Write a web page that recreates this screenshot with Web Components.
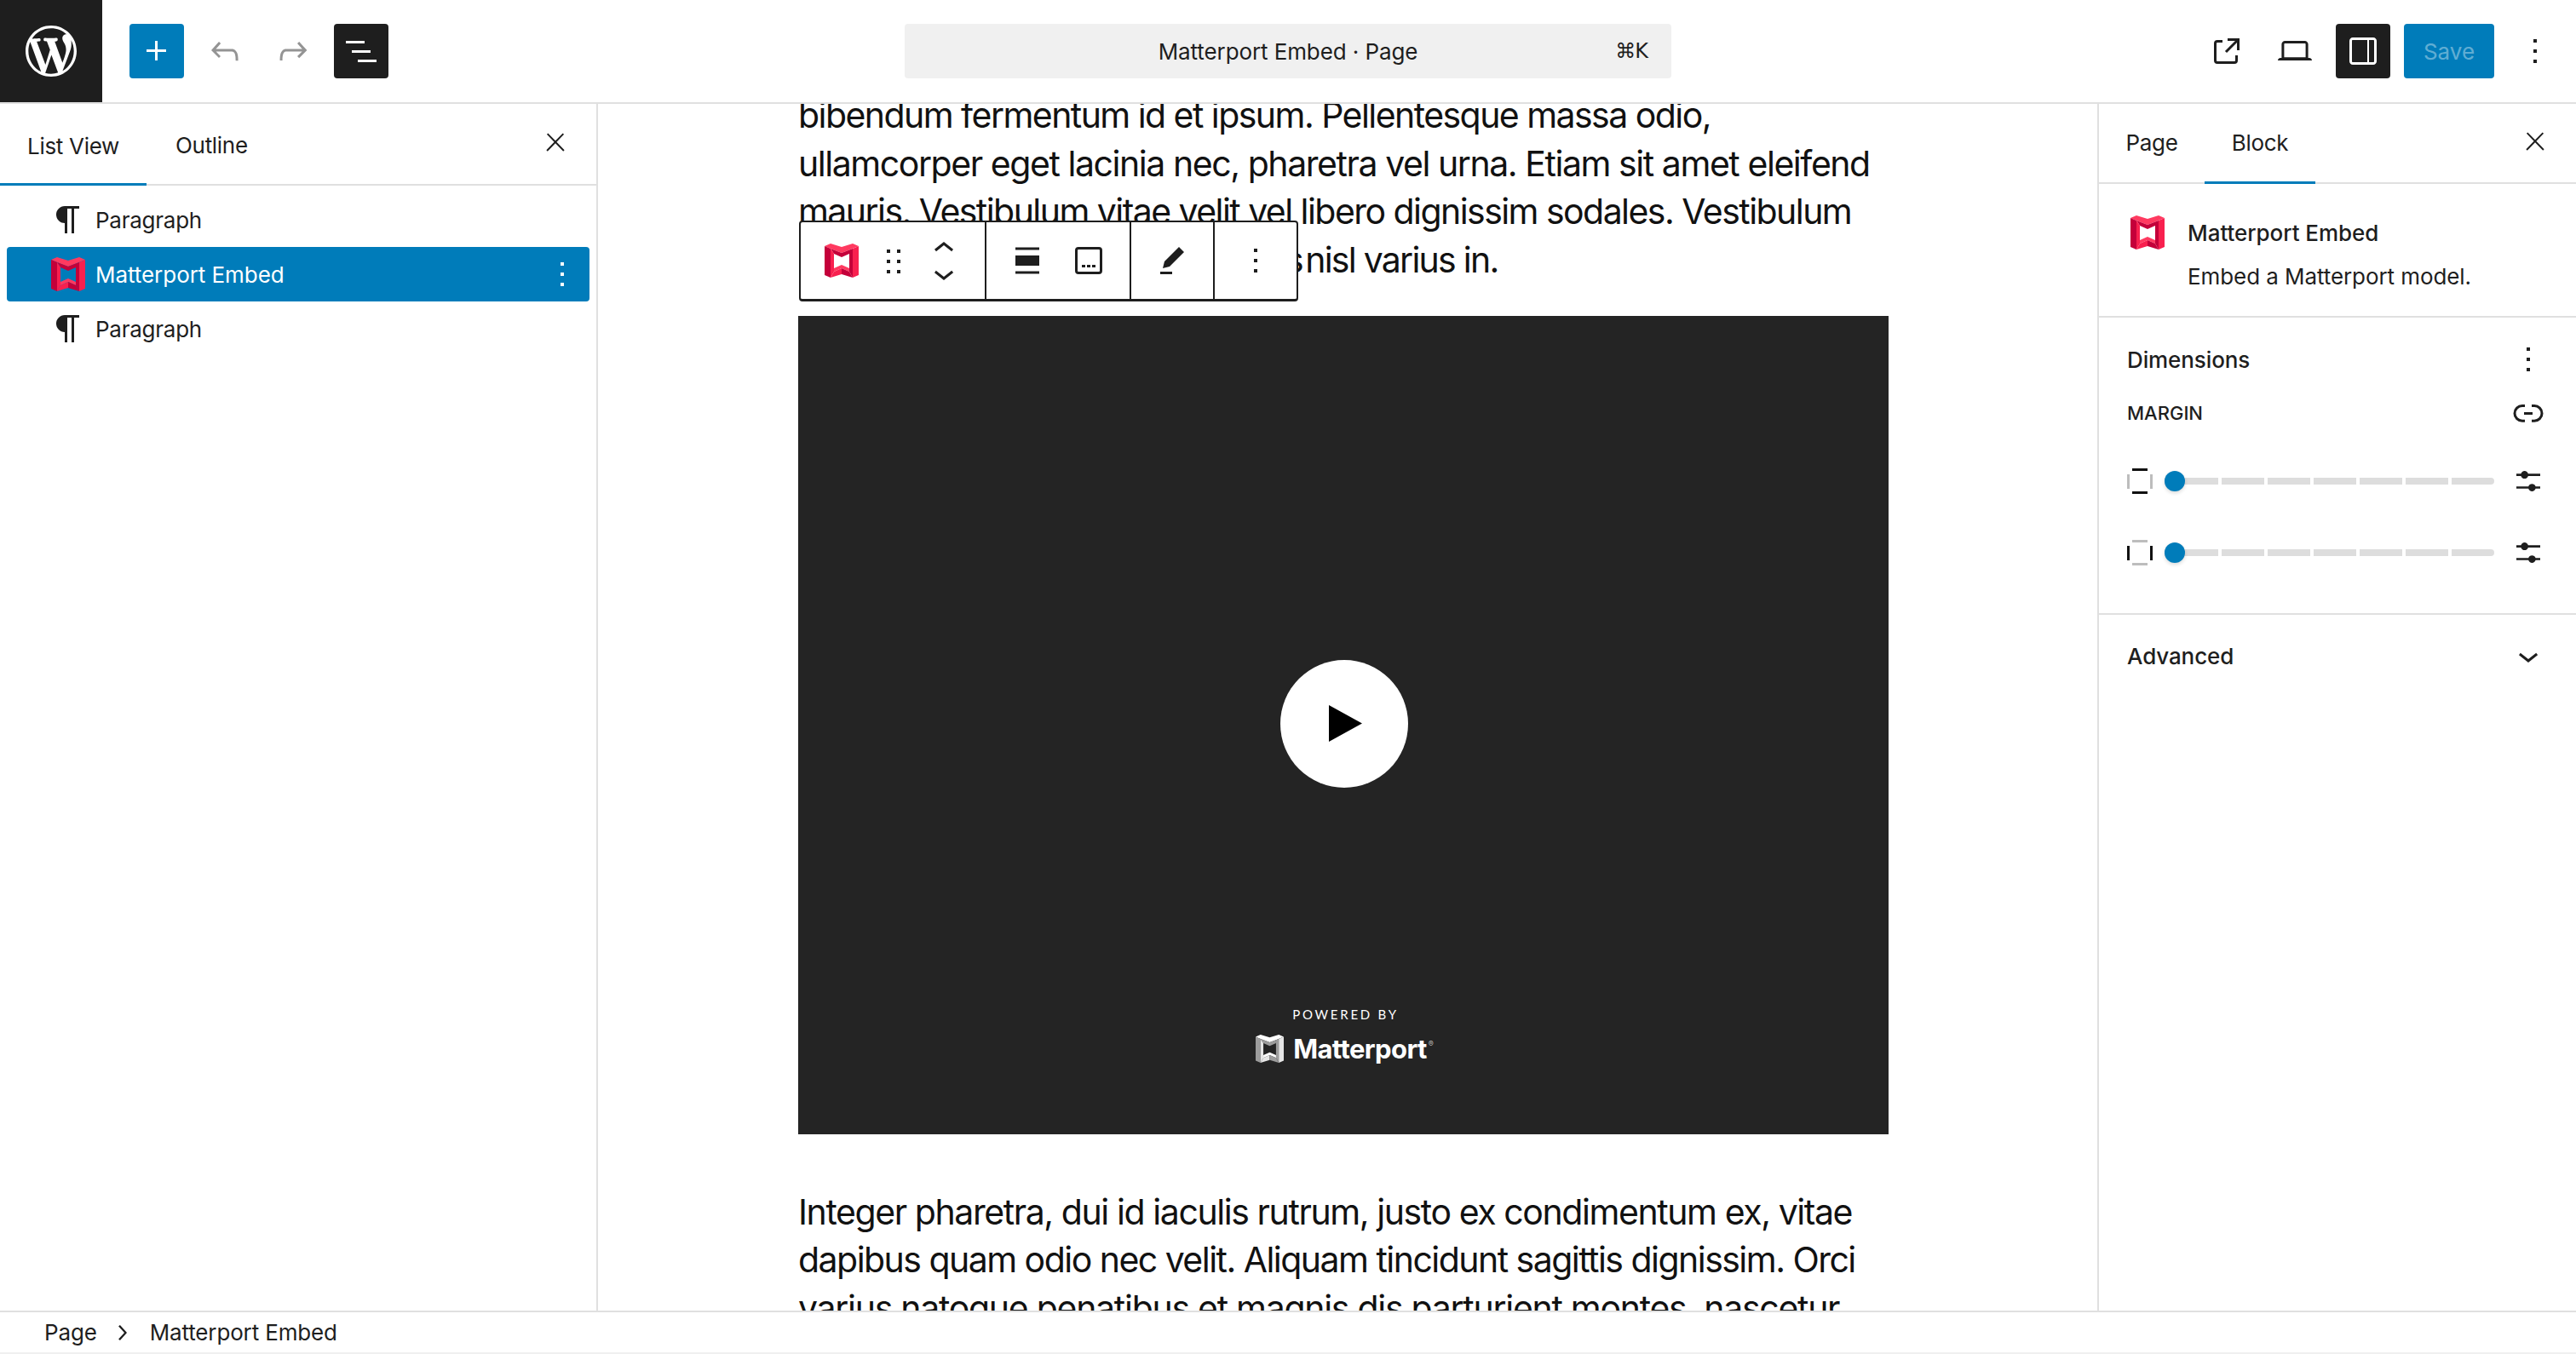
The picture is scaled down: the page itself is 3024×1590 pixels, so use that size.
<!DOCTYPE html>
<html lang="en">
<head>
<meta charset="utf-8">
<title>Matterport Embed · Page</title>
<style>
  html, body { margin: 0; height: 100%; background: #fff; }
  body { font-family: Inter, "Liberation Sans", sans-serif; font-size: 26px; color: #1e1e1e; }
</style>
</head>
<body>
<wp-app>
  <wp-topbar slot="top"></wp-topbar>
  <wp-list-view slot="left"></wp-list-view>
  <wp-canvas slot="canvas"></wp-canvas>
  <wp-inspector slot="right"></wp-inspector>
  <wp-breadcrumb slot="foot"></wp-breadcrumb>
</wp-app>

<script>
const ICONS = {
  plus: 'M11 12.5V17.5H12.5V12.5H17.5V11H12.5V6H11V11H6V12.5H11Z',
  undo: 'M18.3 11.7c-.6-.6-1.4-.9-2.3-.9H6.7l2.9-3.3-1.1-1-4.5 5L8.5 16l1-1-2.7-2.7H16c.5 0 .9.2 1.3.5 1 1 1 3.4 1 4.5v.3h1.5v-.2c0-1.5 0-4.3-1.5-5.7z',
  redo: 'M15.6 6.5l-1.1 1 2.9 3.3H8c-.9 0-1.7.3-2.3.9-1.4 1.5-1.4 4.2-1.4 5.6v.2h1.5v-.3c0-1.1 0-3.5 1-4.5.3-.3.7-.5 1.3-.5h9.2L14.5 15l1.1 1.1 4.6-4.6-4.6-5z',
  list: 'M3 6h11v1.5H3V6Zm3.5 5.5h11V13h-11v-1.5ZM21 17H10v1.5h11V17Z',
  close: 'M13 11.8l6.1-6.3-1-1-6.1 6.2-6.1-6.2-1 1 6.1 6.3-6.5 6.7 1 1 6.5-6.6 6.5 6.6 1-1z',
  paragraph: 'm9.99609 14v-.2251l.00391.0001v6.225h1.5v-14.5h2.5v14.5h1.5v-14.5h3v-1.5h-8.50391c-2.76142 0-5 2.23858-5 5 0 2.7614 2.23858 5 5 5z',
  more: 'M13 19h-2v-2h2v2zm0-6h-2v-2h2v2zm0-6h-2V5h2v2z',
  drag: 'M8.5 7.5h2v-2h-2v2zm0 6h2v-2h-2v2zm0 6h2v-2h-2v2zm6-14v2h2v-2h-2zm0 8h2v-2h-2v2zm0 6h2v-2h-2v2z',
  up: 'M6.5 12.4L12 8l5.5 4.4-.9 1.2L12 10l-4.5 3.6-1-1.2z',
  down: 'M17.5 11.6L12 16l-5.5-4.4.9-1.2L12 14l4.6-3.6 1 1.2z',
  align: 'M5 15h14V9H5v6zm0 4.8h14v-1.5H5v1.5zM5 4.2v1.5h14V4.2H5z',
  caption: 'M6 5.5h12a.5.5 0 0 1 .5.5v12a.5.5 0 0 1-.5.5H6a.5.5 0 0 1-.5-.5V6a.5.5 0 0 1 .5-.5ZM4 6a2 2 0 0 1 2-2h12a2 2 0 0 1 2 2v12a2 2 0 0 1-2 2H6a2 2 0 0 1-2-2V6Zm4 10h2v-1.5H8V16Zm5 0h-2v-1.5h2V16Zm1 0h2v-1.5h-2V16Z',
  pencil: 'm19 7-3-3-8.5 8.5-1 4 4-1L19 7Zm-7 11.5H5V20h7v-1.5Z',
  external: 'M19.5 4.5h-7V6h4.44l-5.97 5.97 1.06 1.06L18 7.06v4.44h1.5v-7Zm-13 1a2 2 0 0 0-2 2v10a2 2 0 0 0 2 2h10a2 2 0 0 0 2-2v-3H17v3a.5.5 0 0 1-.5.5h-10a.5.5 0 0 1-.5-.5v-10a.5.5 0 0 1 .5-.5h3V5.5h-3Z',
  laptop: 'M20.5 16h-.7V8c0-1.1-.9-2-2-2H6.2c-1.1 0-2 .9-2 2v8h-.7c-.8 0-1.5.7-1.5 1.5h20c0-.8-.7-1.5-1.5-1.5zM5.7 8c0-.3.2-.5.5-.5h11.6c.3 0 .5.2.5.5v7.6H5.7V8z',
  drawer: 'M18 4H6c-1.1 0-2 .9-2 2v12c0 1.1.9 2 2 2h12c1.1 0 2-.9 2-2V6c0-1.1-.9-2-2-2zM5.5 18V6c0-.3.2-.5.5-.5h8.5v13H6c-.3 0-.5-.2-.5-.5zm13 0c0 .3-.2.5-.5.5h-2.5v-13H18c.3 0 .5.2.5.5v12z',
  sliders: 'M14.5 13.8c-1.1 0-2.1.7-2.4 1.8H4V17h8.1c.3 1 1.3 1.8 2.4 1.8s2.1-.7 2.4-1.8H20v-1.5h-3.1c-.3-1-1.3-1.7-2.4-1.7zM11.9 7c-.3-1-1.3-1.8-2.4-1.8S7.4 6 7.1 7H4v1.5h3.1c.3 1 1.3 1.8 2.4 1.8s2.1-.7 2.4-1.8H20V7h-8.1z',
  link: 'M10 17.389H8.444A5.194 5.194 0 1 1 8.444 7H10v1.5H8.444a3.694 3.694 0 0 0 0 7.389H10v1.5ZM14 7h1.556a5.194 5.194 0 0 1 0 10.39H14v-1.5h1.556a3.694 3.694 0 0 0 0-7.39H14V7Zm-4.5 6h5v-1.5h-5V13Z',
  right: 'M10.6 6L9.4 7l4.6 5-4.6 5 1.2 1 5.4-6z',
};
const WP_MARK = 'M20 10c0-5.51-4.49-10-10-10C4.48 0 0 4.49 0 10c0 5.52 4.48 10 10 10 5.51 0 10-4.48 10-10zM7.78 15.37L4.37 6.22c.55-.02 1.17-.08 1.17-.08.5-.06.44-1.13-.06-1.11 0 0-1.45.11-2.37.11-.18 0-.37 0-.58-.01C4.12 2.69 6.87 1.11 10 1.11c2.33 0 4.45.87 6.05 2.34-.68-.11-1.65.39-1.65 1.58 0 .74.45 1.36.9 2.1.35.61.55 1.36.55 2.46 0 1.49-1.4 5-1.4 5l-3.03-8.37c.54-.02.82-.17.82-.17.5-.05.44-1.25-.06-1.22 0 0-1.44.12-2.38.12-.87 0-2.33-.12-2.33-.12-.5-.03-.56 1.2-.06 1.22l.92.08 1.26 3.41zM17.41 10c.24-.64.74-1.87.43-4.25.7 1.29 1.05 2.71 1.05 4.25 0 3.29-1.73 6.24-4.4 7.78.97-2.59 1.94-5.2 2.92-7.78zM6.1 18.09C3.12 16.65 1.11 13.53 1.11 10c0-1.3.23-2.48.72-3.59C3.25 10.3 4.67 14.2 6.1 18.09zm4.03-6.63l2.58 6.98c-.86.29-1.76.45-2.71.45-.79 0-1.57-.11-2.29-.33.81-2.38 1.62-4.74 2.42-7.1z';

class WpIcon extends HTMLElement {
  constructor() {
    super();
    this.attachShadow({ mode: 'open' });
  }
  connectedCallback() {
    const size = this.getAttribute('size') || 48;
    const path = ICONS[this.getAttribute('name')];
    this.shadowRoot.innerHTML = `
      <style>
        :host { display: inline-flex; flex: none; width: ${size}px; height: ${size}px; }
        svg { display: block; fill: currentColor; fill-rule: evenodd; }
      </style>
      <svg viewBox="0 0 24 24" width="${size}" height="${size}"><path d="${path}"/></svg>
    `;
  }
}
customElements.define('wp-icon', WpIcon);

class MatterportLogo extends HTMLElement {
  constructor() {
    super();
    this.attachShadow({ mode: 'open' });
  }
  connectedCallback() {
    const size = this.getAttribute('size') || 40;
    const mono = this.hasAttribute('mono');
    const light = mono ? '#ffffff' : '#ff3a60';
    const mid = mono ? '#e6e6e6' : '#f8204f';
    const dark = mono ? '#9c9c9c' : '#c4003a';
    this.shadowRoot.innerHTML = `
      <style>
        :host { display: inline-flex; flex: none; width: ${size}px; height: ${size}px; }
        svg { display: block; }
      </style>
      <svg viewBox="0 0 40 40" width="${size}" height="${size}">
        <polygon fill="${light}" points="0,3 7,0 20,4 33,0 40,3 29,7.5 20,11 7,6"/>
        <polygon fill="${dark}" points="7,6 20,11 29,7.5 29,12 20,16 11,12"/>
        <polygon fill="${dark}" points="0,3 7,6 7,40 0,37"/>
        <polygon fill="${mid}" points="7,6 11,12 11,33 7,40"/>
        <polygon fill="${dark}" points="29,7.5 33,6 33,40 29,33"/>
        <polygon fill="${mid}" points="33,6 40,3 40,37 33,40"/>
        <polygon fill="${light}" points="11,29 20,25 29,29 29,33 20,29 11,33"/>
        <polygon fill="${mid}" points="7,40 11,33 20,29 20,36"/>
        <polygon fill="${dark}" points="20,29 29,33 33,40 20,36"/>
      </svg>
    `;
  }
}
customElements.define('matterport-logo', MatterportLogo);

class WpApp extends HTMLElement {
  constructor() {
    super();
    this.attachShadow({ mode: 'open' });
    this.shadowRoot.innerHTML = `
      <style>
        :host {
          display: grid;
          width: 3024px;
          height: 1590px;
          overflow: hidden;
          grid-template-columns: 702px 1fr 562px;
          grid-template-rows: 122px 1417px 51px;
          grid-template-areas: "top top top" "left canvas right" "foot foot foot";
        }
        ::slotted([slot=top]) { grid-area: top; }
        ::slotted([slot=left]) { grid-area: left; }
        ::slotted([slot=canvas]) { grid-area: canvas; }
        ::slotted([slot=right]) { grid-area: right; }
        ::slotted([slot=foot]) { grid-area: foot; }
      </style>
      <slot name="top"></slot>
      <slot name="left"></slot>
      <slot name="canvas"></slot>
      <slot name="right"></slot>
      <slot name="foot"></slot>
    `;
  }
}
customElements.define('wp-app', WpApp);

class WpTopbar extends HTMLElement {
  constructor() {
    super();
    this.attachShadow({ mode: 'open' });
    this.shadowRoot.innerHTML = `
      <style>
        :host {
          display: grid;
          grid-template-columns: 1fr 900px 1fr;
          align-items: center;
          border-bottom: 2px solid #e0e0e0;
          box-sizing: border-box;
          height: 122px;
        }
        .left { display: flex; align-items: center; }
        .wp {
          width: 120px; height: 120px;
          background: #1e1e1e;
          display: flex; align-items: center; justify-content: center;
          margin-right: 32px;
        }
        .wp svg { fill: #fff; display: block; }
        .tools { display: flex; gap: 16px; }
        .btn {
          width: 64px; height: 64px;
          display: flex; align-items: center; justify-content: center;
          border-radius: 4px;
        }
        .blue { background: #007cba; color: #fff; }
        .black { background: #1e1e1e; color: #fff; }
        .off { color: #949494; }
        .command {
          height: 64px;
          background: #f0f0f0;
          border-radius: 4px;
          display: flex; align-items: center; justify-content: center;
          position: relative;
          letter-spacing: -0.1px;
        }
        .kbd { position: absolute; right: 28px; font-family: "DejaVu Sans", Inter, sans-serif; font-size: 24px; letter-spacing: -1px; }
        .right { display: flex; gap: 16px; justify-content: flex-end; padding-right: 16px; }
        .save {
          width: 106px; height: 64px;
          background: #007cba; color: rgba(255,255,255,.4);
          border-radius: 4px;
          display: flex; align-items: center; justify-content: center;
        }
      </style>
      <div class="left">
        <div class="wp"><svg viewBox="0 0 20 20" width="60" height="60"><path d="${WP_MARK}"/></svg></div>
        <div class="tools">
          <div class="btn blue"><wp-icon name="plus"></wp-icon></div>
          <div class="btn off"><wp-icon name="undo"></wp-icon></div>
          <div class="btn off"><wp-icon name="redo"></wp-icon></div>
          <div class="btn black"><wp-icon name="list"></wp-icon></div>
        </div>
      </div>
      <div class="command">
        <span>Matterport Embed · Page</span>
        <span class="kbd">⌘K</span>
      </div>
      <div class="right">
        <div class="btn"><wp-icon name="external"></wp-icon></div>
        <div class="btn"><wp-icon name="laptop"></wp-icon></div>
        <div class="btn black"><wp-icon name="drawer"></wp-icon></div>
        <div class="save">Save</div>
        <div class="btn"><wp-icon name="more"></wp-icon></div>
      </div>
    `;
  }
}
customElements.define('wp-topbar', WpTopbar);

class WpListRow extends HTMLElement {
  constructor() {
    super();
    this.attachShadow({ mode: 'open' });
  }
  connectedCallback() {
    const selected = this.hasAttribute('selected');
    const icon = this.getAttribute('icon');
    this.shadowRoot.innerHTML = `
      <style>
        :host {
          display: flex;
          align-items: center;
          height: 64px;
          padding: 0 8px 0 48px;
          gap: 8px;
          border-radius: 4px;
          background: ${selected ? '#007cba' : 'transparent'};
          color: ${selected ? '#fff' : '#1e1e1e'};
        }
        .ico { width: 48px; height: 48px; display: flex; align-items: center; justify-content: center; flex: none; }
        .label { flex: 1; letter-spacing: ${selected ? '-0.05px' : '-0.25px'}; }
      </style>
      <div class="ico">
        ${icon === 'matterport' ? '<matterport-logo></matterport-logo>' : `<wp-icon name="${icon}"></wp-icon>`}
      </div>
      <span class="label"><slot></slot></span>
      ${selected ? '<wp-icon name="more"></wp-icon>' : ''}
    `;
  }
}
customElements.define('wp-list-row', WpListRow);

class WpListView extends HTMLElement {
  constructor() {
    super();
    this.attachShadow({ mode: 'open' });
    this.shadowRoot.innerHTML = `
      <style>
        :host { display: block; border-right: 2px solid #e0e0e0; box-sizing: border-box; }
        .tabs {
          display: flex; align-items: center;
          height: 96px;
          border-bottom: 2px solid #e0e0e0;
          box-sizing: border-box;
        }
        .tab { height: 94px; line-height: 98px; box-sizing: border-box; letter-spacing: -0.3px; }
        .tab.on { width: 172px; padding-left: 32px; box-shadow: inset 0 -3px 0 #007cba; margin-bottom: -2px; height: 96px; line-height: 100px; }
        .tab + .tab { padding-left: 34px; }
        .close { margin-left: auto; margin-right: 31px; margin-top: -4px; }
        .rows { display: flex; flex-direction: column; padding: 8px; }
      </style>
      <div class="tabs">
        <div class="tab on">List View</div>
        <div class="tab">Outline</div>
        <wp-icon class="close" name="close" size="34"></wp-icon>
      </div>
      <div class="rows">
        <wp-list-row icon="paragraph">Paragraph</wp-list-row>
        <wp-list-row icon="matterport" selected>Matterport Embed</wp-list-row>
        <wp-list-row icon="paragraph">Paragraph</wp-list-row>
      </div>
    `;
  }
}
customElements.define('wp-list-view', WpListView);

class WpPara extends HTMLElement {
  constructor() {
    super();
    this.attachShadow({ mode: 'open' });
    this.shadowRoot.innerHTML = `
      <style>
        :host { display: block; font-size: 41px; line-height: 56.67px; color: #111; letter-spacing: -1.5px; }
        ::slotted(span) { display: block; white-space: nowrap; }
      </style>
      <slot></slot>
    `;
  }
}
customElements.define('wp-para', WpPara);

class WpBlockToolbar extends HTMLElement {
  constructor() {
    super();
    this.attachShadow({ mode: 'open' });
    this.shadowRoot.innerHTML = `
      <style>
        :host {
          position: absolute;
          left: 1px; top: 152px;
          display: flex;
          height: 95px;
          box-sizing: border-box;
          background: #fff;
          border: 2px solid #1e1e1e;
          border-bottom-width: 3px;
          border-radius: 4px;
          color: #1e1e1e;
        }
        .group { display: flex; align-items: center; padding: 0 24px; border-right: 2px solid #1e1e1e; }
        .group:last-child { border-right: 0; }
        .one { gap: 12px; width: 168px; }
        .two { gap: 24px; }
        .mover { width: 48px; height: 77px; display: flex; flex-direction: column; }
        .mover wp-icon + wp-icon { margin-top: -19px; }
      </style>
      <div class="group one">
        <matterport-logo style="margin:0 4px"></matterport-logo>
        <wp-icon name="drag"></wp-icon>
        <div class="mover">
          <wp-icon name="up"></wp-icon>
          <wp-icon name="down"></wp-icon>
        </div>
      </div>
      <div class="group two">
        <wp-icon name="align"></wp-icon>
        <wp-icon name="caption"></wp-icon>
      </div>
      <div class="group"><wp-icon name="pencil"></wp-icon></div>
      <div class="group"><wp-icon name="more"></wp-icon></div>
    `;
  }
}
customElements.define('wp-block-toolbar', WpBlockToolbar);

class WpVideo extends HTMLElement {
  constructor() {
    super();
    this.attachShadow({ mode: 'open' });
    this.shadowRoot.innerHTML = `
      <style>
        :host {
          display: flex; flex-direction: column; align-items: center;
          height: 961px;
          box-sizing: border-box;
          padding-top: 404px;
          background: #242424;
          color: #fff;
        }
        .play {
          width: 150px; height: 150px; border-radius: 50%;
          background: #fff;
          margin-left: 2px;
          display: flex; align-items: center; justify-content: center;
        }
        .play svg { margin-left: 3px; display: block; }
        .powered {
          margin: 256px 0 0 5px;
          font-family: Lato, sans-serif;
          font-size: 15px; line-height: 20px;
          letter-spacing: 2.75px;
          white-space: nowrap;
        }
        .brand { display: flex; align-items: center; margin: 14px 0 0 3px; height: 33px; gap: 11px; }
        .name { font-weight: 700; font-size: 31px; letter-spacing: -0.6px; line-height: 33px; }
        .name sup { font-size: 9px; font-weight: 400; vertical-align: 14px; line-height: 0; letter-spacing: 0; margin-left: 2px; color: #bbb; }
      </style>
      <div class="play"><svg width="39" height="43" viewBox="0 0 39 43"><polygon points="0,0 39,21.5 0,43" fill="#000"/></svg></div>
      <div class="powered">POWERED BY</div>
      <div class="brand">
        <matterport-logo mono size="33"></matterport-logo>
        <span class="name">Matterport<sup>®</sup></span>
      </div>
    `;
  }
}
customElements.define('wp-video', WpVideo);

class WpCanvas extends HTMLElement {
  constructor() {
    super();
    this.attachShadow({ mode: 'open' });
    this.shadowRoot.innerHTML = `
      <style>
        :host { display: block; overflow: hidden; background: #fff; }
        .page { position: relative; width: 1280px; margin: -15px 0 0 235px; }
        wp-video { margin: 37px 0 63px; }
      </style>
      <div class="page">
        <wp-para>
          <span style="letter-spacing:-1.55px">bibendum fermentum id et ipsum. Pellentesque massa odio,</span>
          <span style="letter-spacing:-1.44px">ullamcorper eget lacinia nec, pharetra vel urna. Etiam sit amet eleifend</span>
          <span style="letter-spacing:-1.55px">mauris. Vestibulum vitae velit vel libero dignissim sodales. Vestibulum</span>
          <span style="padding-left:572px;letter-spacing:-1.75px"><i style="font-style:normal;letter-spacing:-5px">s </i>nisl varius in.</span>
        </wp-para>
        <wp-block-toolbar></wp-block-toolbar>
        <wp-video></wp-video>
        <wp-para>
          <span style="letter-spacing:-1.42px">Integer pharetra, dui id iaculis rutrum, justo ex condimentum ex, vitae</span>
          <span style="letter-spacing:-1.53px">dapibus quam odio nec velit. Aliquam tincidunt sagittis dignissim. Orci</span>
          <span style="letter-spacing:-1.28px">varius natoque penatibus et magnis dis parturient montes, nascetur</span>
        </wp-para>
      </div>
    `;
  }
}
customElements.define('wp-canvas', WpCanvas);

class WpSlider extends HTMLElement {
  constructor() {
    super();
    this.attachShadow({ mode: 'open' });
  }
  connectedCallback() {
    const vertical = this.getAttribute('side') === 'vertical';
    const on = '#111', off = '#bdbdbd';
    this.shadowRoot.innerHTML = `
      <style>
        :host { display: flex; align-items: center; gap: 14px; height: 48px; }
        svg { display: block; flex: none; }
        .track { position: relative; flex: none; width: 387px; height: 8px; display: grid; grid-template-columns: 63px repeat(6, 1fr); gap: 4px; }
        .track i { background: #ddd; }
        .track i:last-of-type { border-radius: 0 4px 4px 0; }
        .thumb {
          position: absolute; left: 0; top: -8px;
          width: 24px; height: 24px; border-radius: 50%;
          background: #007cba;
          box-shadow: 0 2px 4px rgba(0,0,0,.15);
        }
      </style>
      <svg width="30" height="30" viewBox="0 0 30 30">
        <rect x="6" y="0" width="18" height="3" fill="${vertical ? off : on}"/>
        <rect x="6" y="27" width="18" height="3" fill="${vertical ? off : on}"/>
        <rect x="0" y="7" width="3" height="17" fill="${vertical ? on : off}"/>
        <rect x="27" y="7" width="3" height="17" fill="${vertical ? on : off}"/>
      </svg>
      <div class="track">
        <i></i><i></i><i></i><i></i><i></i><i></i><i></i>
        <div class="thumb"></div>
      </div>
      <wp-icon name="sliders" size="42" style="margin-left:5px"></wp-icon>
    `;
  }
}
customElements.define('wp-slider', WpSlider);

class WpInspector extends HTMLElement {
  constructor() {
    super();
    this.attachShadow({ mode: 'open' });
    this.shadowRoot.innerHTML = `
      <style>
        :host { display: block; border-left: 2px solid #e0e0e0; box-sizing: border-box; }
        .tabs {
          display: flex; align-items: center;
          height: 92px;
          border-bottom: 2px solid #e0e0e0;
        }
        .tab { height: 92px; line-height: 92px; box-sizing: border-box; letter-spacing: -0.3px; text-align: center; }
        .page-tab { width: 124px; }
        .tab.on { width: 130px; box-shadow: inset 0 -3px 0 #007cba; height: 94px; line-height: 92px; margin-bottom: -2px; }
        .close { margin-left: auto; margin-right: 31px; margin-top: -4px; }
        .card {
          display: grid;
          grid-template-columns: 40px 1fr;
          align-content: start;
          column-gap: 32px;
          padding: 37px 32px 0 33px;
          box-sizing: border-box;
          border-bottom: 2px solid #e0e0e0;
          height: 157px;
        }
        .card matterport-logo { grid-row: span 2; margin-left: 4px; }
        .title { font-weight: 500; line-height: 42px; letter-spacing: -0.05px; margin-left: -1px; }
        .desc { line-height: 42px; margin: 9px 0 0 -1px; letter-spacing: -0.08px; }
        .dims { height: 349px; box-sizing: border-box; border-bottom: 2px solid #e0e0e0; padding: 25px 32px 0 33px; }
        .head { display: flex; justify-content: space-between; align-items: center; height: 48px; font-weight: 500; letter-spacing: -0.1px; }
        .margin { display: flex; justify-content: space-between; align-items: center; height: 48px; margin-top: 15px; font-size: 22px; font-weight: 500; }
        wp-slider { margin-top: 36px; }
        .margin + wp-slider { margin-top: 32px; }
        .adv { padding: 0 32px 0 33px; height: 96px; display: flex; justify-content: space-between; align-items: center; font-weight: 500; letter-spacing: -0.1px; }
      </style>
      <div class="tabs">
        <div class="tab page-tab">Page</div>
        <div class="tab on">Block</div>
        <wp-icon class="close" name="close" size="34"></wp-icon>
      </div>
      <div class="card">
        <matterport-logo></matterport-logo>
        <div class="title">Matterport Embed</div>
        <div class="desc">Embed a Matterport model.</div>
      </div>
      <div class="dims">
        <div class="head">Dimensions <wp-icon name="more"></wp-icon></div>
        <div class="margin">MARGIN <wp-icon name="link"></wp-icon></div>
        <wp-slider side="horizontal"></wp-slider>
        <wp-slider side="vertical"></wp-slider>
      </div>
      <div class="adv">Advanced <wp-icon name="down"></wp-icon></div>
    `;
  }
}
customElements.define('wp-inspector', WpInspector);

class WpBreadcrumb extends HTMLElement {
  constructor() {
    super();
    this.attachShadow({ mode: 'open' });
    this.shadowRoot.innerHTML = `
      <style>
        :host {
          display: flex; align-items: center;
          border-top: 2px solid #e0e0e0;
          border-bottom: 2px solid #f0f0f0;
          box-sizing: border-box;
          padding-left: 52px;
          letter-spacing: -0.15px;
        }
        wp-icon { margin: 0 15px 0 11px; }
      </style>
      <span>Page</span>
      <wp-icon name="right" size="36"></wp-icon>
      <span>Matterport Embed</span>
    `;
  }
}
customElements.define('wp-breadcrumb', WpBreadcrumb);
</script>
</body>
</html>
